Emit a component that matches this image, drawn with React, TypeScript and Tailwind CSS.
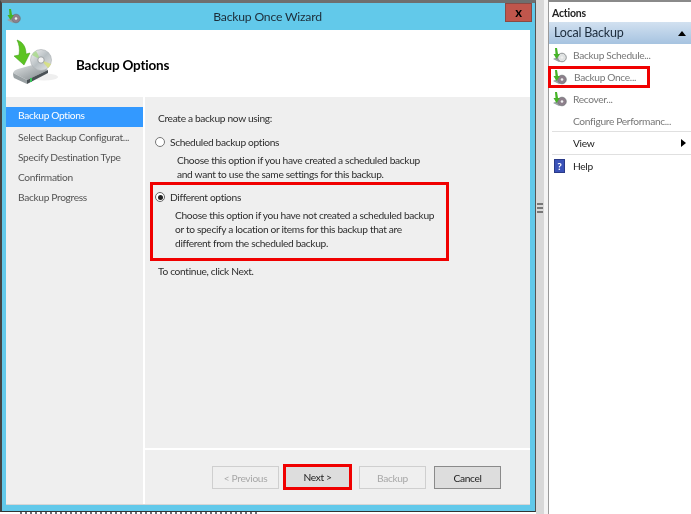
const font = { fontFamily: 'Lato, Roboto, sans-serif' };

function BackupIcon() {
  return (
    <svg width="50" height="50" viewBox="0 0 50 50" className="shrink-0">
      <defs>
        <linearGradient id="d" x1="0" y1="0" x2="1" y2="1">
          <stop offset="0" stopColor="#f4f4f4" />
          <stop offset="0.5" stopColor="#b9c0c4" />
          <stop offset="1" stopColor="#e6e8e8" />
        </linearGradient>
        <linearGradient id="b" x1="0" y1="0" x2="1" y2="1">
          <stop offset="0" stopColor="#e2e5e6" />
          <stop offset="1" stopColor="#7c8488" />
        </linearGradient>
      </defs>
      <ellipse cx="32" cy="38" rx="14" ry="3.5" fill="#efefef" />
      <path d="M1 34 Q2 31 6 30 L24 25 L36 31 L15 41 Z" fill="url(#b)" />
      <path d="M1 34 L15 41 V45 L2 39 Q1 37 1 34 Z" fill="#9aa1a4" />
      <path d="M15 41 L36 31 V34 L15 45 Z" fill="#4a5155" />
      <rect x="18" y="39" width="2" height="4" fill="#39c05a" />
      <circle cx="29" cy="21" r="10.5" fill="url(#d)" stroke="#a8adb0" strokeWidth="0.6" />
      <path d="M29 21 L20 16 A10.5 10.5 0 0 1 24 12 Z" fill="#a9d98c" opacity="0.85" />
      <path d="M29 21 L39 25 A10.5 10.5 0 0 1 36 29 Z" fill="#d7e07a" opacity="0.85" />
      <circle cx="29" cy="21" r="3.2" fill="#f4f4f4" stroke="#8d9396" strokeWidth="0.8" />
      <path d="M5 1 C11 3 14 8 14 15 L18 14 L12 26 L2 17 L7 16 C8 10 7 5 5 1 Z" fill="#5cc422" stroke="#3c9a12" strokeWidth="0.5" />
    </svg>
  );
}

function SmallIcon({ gray = false }: { gray?: boolean }) {
  return (
    <svg width="16" height="17" viewBox="0 0 16 17" className="shrink-0">
      <path d="M1 12 L7 9 L13 11 L7 15 Z" fill="#9aa1a4" />
      <circle cx="10" cy="10.5" r="4.3" fill={gray ? "#dfe2e2" : "#8d7f8b"} stroke="#6b7073" strokeWidth="0.7" />
      <circle cx="10" cy="10.5" r="1.3" fill="#f0f0f0" />
      <path d="M3 1 L5 1 L6 7 L8 7 L4.5 12 L1.5 7 L3.5 7 Z" fill="#45b326" />
    </svg>
  );
}

const steps = ["Select Backup Configurat...", "Specify Destination Type", "Confirmation", "Backup Progress"];

export default function App() {
  return (
    <div className="w-[691px] h-[514px] overflow-hidden bg-white flex text-[10.2px] leading-[14px] tracking-[-0.33px] whitespace-nowrap text-[#2e2e2e] [&_span]:blur-[0.3px]" style={font}>
      <div className="w-[536px] h-[514px] shrink-0 flex flex-col">
        <div className="h-[512px] shrink-0 bg-[#62c9ea] border-t-[3px] border-t-[#6f6f6f] border-l-[2px] border-l-[#444] border-r border-r-[#555] border-b border-b-[#333] flex flex-col pl-[4px] pr-[3px]">
          <div className="h-[27px] shrink-0 flex items-start">
            <div className="mt-[5px]"><SmallIcon /></div>
            <div className="flex-1 text-center text-[12.2px] tracking-[-0.2px] leading-[27px] text-[#1c2c38] pl-[8px]"><span>Backup Once Wizard</span></div>
            <div className="w-[27px] h-[19px] bg-[#c0564c] border border-[#8a4a44] flex items-center justify-center text-[13px] font-bold text-black leading-none"><span>x</span></div>
          </div>
          <div className="flex-1 flex flex-col w-[524px] mb-[6px] border-b border-[#d6d6d6]">
            <div className="h-[67px] bg-white flex items-center pl-[6px] shrink-0">
              <BackupIcon />
              <div className="ml-[14px] mt-[3px] text-[13.5px] tracking-[-0.2px] font-bold text-black"><span>Backup Options</span></div>
            </div>
            <div className="flex-1 flex bg-[#efefef]">
              <div className="w-[137px] shrink-0 pt-[10px]">
                <div className="h-[20px] bg-[#3399ff] text-white pl-[12px] flex items-start pt-[1px]"><span>Backup Options</span></div>
                <div className="flex flex-col pl-[12px] mt-[3px] text-[#555] gap-[6px]">
                  {steps.map((s) => (
                    <div key={s} className="h-[14px]"><span>{s}</span></div>
                  ))}
                </div>
              </div>
              <div className="w-[2px] shrink-0 bg-white" />
              <div className="flex-1 flex flex-col">
                <div className="flex-1 pl-[6px] pt-[14px] flex flex-col">
                  <div className="pl-[7px]"><span>Create a backup now using:</span></div>
                  <div className="pl-[4px] mt-[10px] flex items-center gap-[5px]">
                    <div className="w-[10px] h-[10px] rounded-full border border-[#777] bg-white" />
                    <span>Scheduled backup options</span>
                  </div>
                  <div className="pl-[26px] mt-[4px]">
                    <div><span>Choose this option if you have created a scheduled backup</span></div>
                    <div><span>and want to use the same settings for this backup.</span></div>
                  </div>
                  <div className="w-[299px] h-[79px] -ml-[1px] mt-[1px] border-[3px] border-[#f00000] pl-[2px] pt-[5px]">
                    <div className="flex items-center gap-[5px]">
                      <div className="w-[10px] h-[10px] rounded-full border border-[#666] bg-white flex items-center justify-center">
                        <div className="w-[5px] h-[5px] rounded-full bg-[#222]" />
                      </div>
                      <span>Different options</span>
                    </div>
                    <div className="pl-[20px] mt-[4px]">
                      <div><span>Choose this option if you have not created a scheduled backup</span></div>
                      <div><span>or to specify a location or items for this backup that are</span></div>
                      <div><span>different from the scheduled backup.</span></div>
                    </div>
                  </div>
                  <div className="pl-[7px] mt-[3px]"><span>To continue, click Next.</span></div>
                </div>
                <div className="h-[56px] shrink-0 border-t-2 border-white flex items-start pl-[67px] pt-[16px]">
                  <div className="w-[67px] h-[23px] border border-[#cfcfcf] text-[#a8a8a8] flex items-center justify-center"><span>&lt; Previous</span></div>
                  <div className="w-[69px] h-[26px] -mt-[2px] ml-[4px] border-[3px] border-[#f00000] bg-[#dddddd] text-[#222] flex items-center justify-center"><span>Next &gt;</span></div>
                  <div className="w-[67px] h-[23px] ml-[7px] border border-[#cfcfcf] text-[#a8a8a8] flex items-center justify-center"><span>Backup</span></div>
                  <div className="w-[67px] h-[23px] ml-[8px] border border-[#8a8a8a] bg-[#dddddd] text-[#222] flex items-center justify-center"><span>Cancel</span></div>
                </div>
              </div>
            </div>
          </div>
        </div>
        <div className="h-[2px] w-[238px] ml-[20px] bg-[repeating-linear-gradient(90deg,#6a6f78_0_2px,#ffffff_2px_5px)]" />
      </div>
      <div className="w-[8px] shrink-0 bg-[#d8d8d8] flex flex-col items-center pt-[203px] gap-[2px]">
        <div className="w-[6px] h-[2px] bg-[#777]" />
        <div className="w-[6px] h-[2px] bg-[#777]" />
        <div className="w-[6px] h-[2px] bg-[#777]" />
      </div>
      <div className="w-[4px] shrink-0 bg-[#f4f4f4]" />
      <div className="flex-1 border-l-[1px] border-[#9a9a9a] border-t-[2px] border-t-[#8a8a8a] pt-[1px]">
        <div className="h-[19px] pl-[3px] font-bold flex items-center text-[10.5px] tracking-[-0.2px] text-[#222]"><span>Actions</span></div>
        <div className="h-[22px] bg-gradient-to-b from-[#d2e1f0] to-[#a6c3e0] flex items-center justify-between pl-[5px] pr-[5px] text-[12.5px] tracking-[-0.2px] text-[#1c2c3c]">
          <span>Local Backup</span>
          <div className="w-0 h-0 border-x-[4px] border-x-transparent border-b-[5px] border-b-black" />
        </div>
        <div className="flex flex-col text-[#777]">
          <div className="h-[22px] pl-[3px] flex items-center gap-[5px]">
            <SmallIcon gray />
            <span>Backup Schedule...</span>
          </div>
          <div className="h-[22px] -ml-[1px] w-[102px] border-[3px] border-[#f00000] flex items-center gap-[6px] pl-[1px]">
            <SmallIcon />
            <span>Backup Once...</span>
          </div>
          <div className="h-[22px] pl-[3px] flex items-center gap-[5px]">
            <SmallIcon />
            <span>Recover...</span>
          </div>
          <div className="h-[21px] pl-[24px] flex items-center"><span>Configure Performanc...</span></div>
          <div className="h-[23px] border-t border-[#e0e0e0] ml-[3px] pl-[21px] pr-[5px] flex items-center justify-between text-[#222]">
            <span>View</span>
            <div className="w-0 h-0 border-y-[4.5px] border-y-transparent border-l-[5px] border-l-black" />
          </div>
          <div className="h-[23px] border-t border-[#e0e0e0] ml-[3px] pl-[2px] flex items-center gap-[8px] text-[#222]">
            <div className="w-[11px] h-[14px] bg-[#3a52b8] border border-[#2a3a88] text-white font-bold text-[10px] flex items-center justify-center"><span>?</span></div>
            <span>Help</span>
          </div>
        </div>
      </div>
    </div>
  );
}
